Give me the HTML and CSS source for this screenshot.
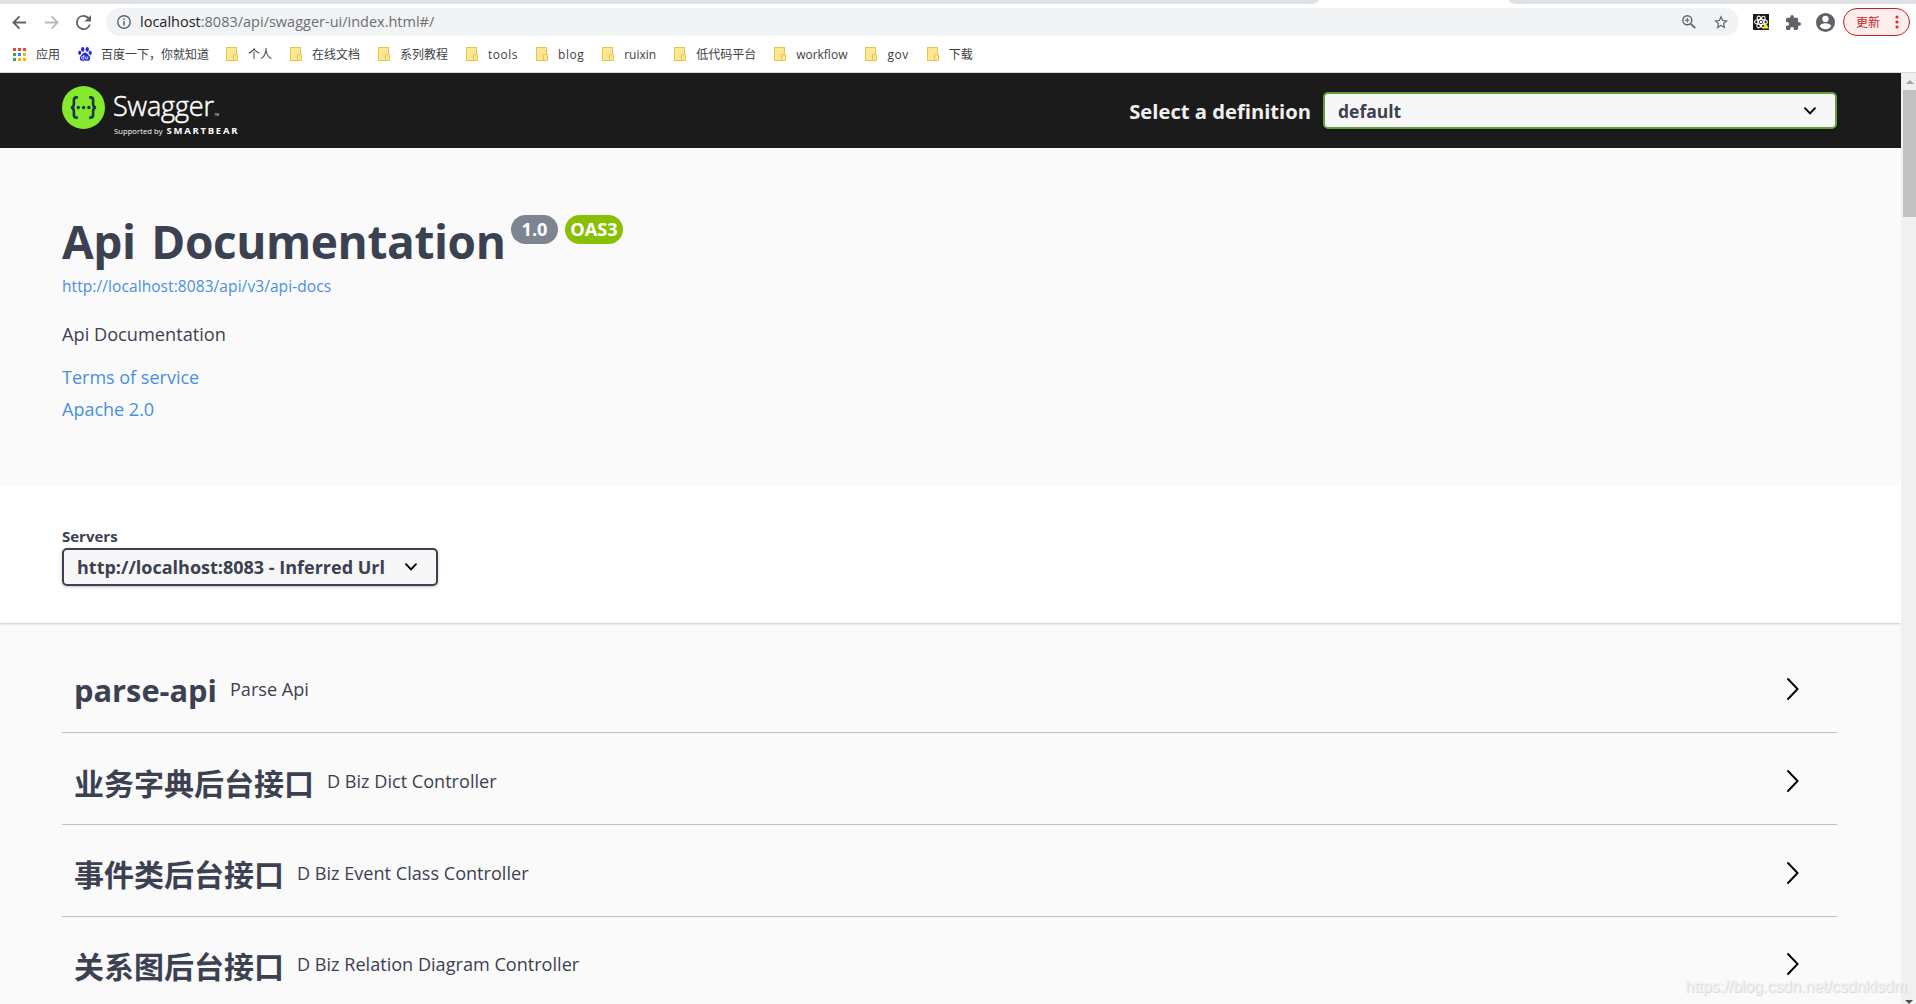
FILE: index.html
```
<!DOCTYPE html>
<html lang="zh-CN">
<head>
    <meta charset="UTF-8">
    <meta name="viewport" content="width=device-width, initial-scale=1.0">
    <title>Swagger UI</title>
    <link rel="stylesheet" href="styles.css">
</head>
<body>
    <div class="browser">
        <div class="tab-strip">
            <div class="tabs-left"></div>
            <div class="tabs-right"></div>
        </div>

        <div class="toolbar">
            <svg class="nav-icon" viewBox="0 0 16 16"><path d="M15 8H2M8 1.5L1.5 8L8 14.5" fill="none" stroke="#5f6368" stroke-width="2"/></svg>
            <svg class="nav-icon" viewBox="0 0 16 16"><path d="M1 8H14M8 1.5L14.5 8L8 14.5" fill="none" stroke="#bbbdbf" stroke-width="2"/></svg>
            <svg class="nav-icon" viewBox="4 4 16 16"><path d="M17.65 6.35A7.96 7.96 0 0 0 12 4a8 8 0 1 0 7.73 10h-2.08A6 6 0 1 1 12 6c1.66 0 3.14.69 4.22 1.78L13 11h7V4l-2.35 2.35z" fill="#5f6368"/></svg>
            <div class="omnibox">
                <svg class="info-icon" viewBox="0 0 14 14"><circle cx="7" cy="7" r="6.2" fill="none" stroke="#5f6368" stroke-width="1.4"/><path d="M6.2 6.2h1.6v4.3H6.2zM6.2 3.4h1.6V5H6.2z" fill="#5f6368"/></svg>
                <span class="address"><b>localhost</b>:8083/api/swagger-ui/index.html#/</span>
                <svg class="zoom-icon" viewBox="0 0 14 14"><g fill="none" stroke="#5f6368"><circle cx="5.3" cy="5.3" r="4.5" stroke-width="1.4"/><path d="M8.8 8.8L13.2 13.2" stroke-width="1.8"/><path d="M5.3 3v4.6M3 5.3h4.6" stroke-width="1.1"/></g></svg>
                <svg class="star-icon" viewBox="2 2 20 19"><path d="M22 9.24l-7.19-.62L12 2 9.19 8.63 2 9.24l5.46 4.73L5.82 21 12 17.27 18.18 21l-1.63-7.03L22 9.24zM12 15.4l-3.76 2.27 1-4.28-3.32-2.88 4.38-.38L12 6.1l1.71 4.04 4.38.38-3.32 2.88 1 4.28L12 15.4z" fill="#5f6368"/></svg>
            </div>
            <svg class="react-icon" viewBox="0 0 16 16">
                <rect width="16" height="16" fill="#1c1c1c"/>
                <g fill="none" stroke="#fff" stroke-width="1.1"><ellipse cx="8" cy="8" rx="6.5" ry="2.5"/><ellipse cx="8" cy="8" rx="6.5" ry="2.5" transform="rotate(60 8 8)"/><ellipse cx="8" cy="8" rx="6.5" ry="2.5" transform="rotate(120 8 8)"/></g>
                <circle cx="8" cy="8" r="1.3" fill="#fff"/>
                <path d="M12.5 8.5L16 14.5H9.5z" fill="#f5e61e"/>
            </svg>
            <svg class="puzzle-icon" viewBox="2 1 21 21"><path d="M20.5 11H19V7c0-1.1-.9-2-2-2h-4V3.5a2.5 2.5 0 0 0-5 0V5H4c-1.1 0-2 .9-2 2v3.8h1.5a2.7 2.7 0 0 1 0 5.4H2V20c0 1.1.9 2 2 2h3.8v-1.5a2.7 2.7 0 0 1 5.4 0V22H17c1.1 0 2-.9 2-2v-4h1.5a2.5 2.5 0 0 0 0-5z" fill="#5f6368"/></svg>
            <svg class="user-icon" viewBox="2 2 20 20"><path d="M12 2a10 10 0 1 0 0 20 10 10 0 0 0 0-20zm0 3a3.3 3.3 0 1 1 0 6.6A3.3 3.3 0 0 1 12 5zm0 14.2a7.2 7.2 0 0 1-6-3.22c.03-1.99 4-3.08 6-3.08s5.97 1.09 6 3.08a7.2 7.2 0 0 1-6 3.22z" fill="#5f6368"/></svg>
            <div class="update">更新
                <svg viewBox="0 0 4 14"><g fill="#d93025"><circle cx="2" cy="2" r="1.6"/><circle cx="2" cy="7" r="1.6"/><circle cx="2" cy="12" r="1.6"/></g></svg>
            </div>
        </div>

        <div class="bookmarks">
            <div class="bookmark apps">
                <svg viewBox="0 0 13 13"><path d="M0 0h3v3H0zM5 0h3v3H5zM10 0h3v3h-3z" fill="#f44336"/><path d="M0 5h3v3H0zM0 10h3v3H0z" fill="#34a853"/><path d="M5 5h3v3H5z" fill="#1a8cff"/><path d="M10 5h3v3h-3zM5 10h3v3H5zM10 10h3v3h-3z" fill="#fbaf00"/></svg>
                应用
            </div>
            <div class="bookmark baidu">
                <svg viewBox="0 0 14 14"><g fill="#2529d8"><ellipse cx="4.7" cy="2.4" rx="1.7" ry="2.3"/><ellipse cx="9.2" cy="2.4" rx="1.7" ry="2.3"/><ellipse cx="1.7" cy="5.8" rx="1.6" ry="2.1"/><ellipse cx="12.2" cy="5.8" rx="1.6" ry="2.1"/><path d="M7 5.6c1.8 0 2.4 1.6 3.8 2.8 2.4 2 1.4 5.4-1 5.4-1.2 0-1.8-.3-2.8-.3s-1.6.3-2.8.3c-2.4 0-3.4-3.4-1-5.4C4.6 7.2 5.2 5.6 7 5.6z"/></g><path d="M5.8 8v4H4.6a1.2 1.2 0 0 1 0-2.4H6M7.7 9.4v2.5h2V9.4" fill="none" stroke="#fff" stroke-width=".8"/></svg>
                百度一下，你就知道
            </div>
            <div class="bookmark"><i class="folder"></i>个人</div>
            <div class="bookmark"><i class="folder"></i>在线文档</div>
            <div class="bookmark"><i class="folder"></i>系列教程</div>
            <div class="bookmark en"><i class="folder"></i>tools</div>
            <div class="bookmark en"><i class="folder"></i>blog</div>
            <div class="bookmark"><i class="folder"></i>ruixin</div>
            <div class="bookmark"><i class="folder"></i>低代码平台</div>
            <div class="bookmark"><i class="folder"></i>workflow</div>
            <div class="bookmark en"><i class="folder"></i>gov</div>
            <div class="bookmark"><i class="folder"></i>下载</div>
        </div>
    </div>

    <div class="viewport">
        <div class="page">
            <div class="topbar">
                <svg class="logo" viewBox="0 0 180 52">
                    <circle cx="21.5" cy="21.5" r="21.5" fill="#85ea2d"/>
                    <g fill="none" stroke="#173647" stroke-width="2.6">
                        <path d="M15.8 11.4h-1.2c-2 0-2.7 1-2.7 2.700v3.600c0 2.300-.8 3.800-3 3.800 2.200 0 3 1.500 3 3.800v3.600c0 1.700.7 2.700 2.700 2.700h1.200"/>
                        <path d="M27.200 11.400h1.200c2 0 2.700 1 2.700 2.700v3.600c0 2.300.8 3.800 3 3.800-2.200 0-3 1.500-3 3.800v3.600c0 1.700-.7 2.700-2.700 2.700h-1.200"/>
                    </g>
                    <g fill="#173647"><circle cx="16.3" cy="21.5" r="1.7"/><circle cx="21.6" cy="21.5" r="1.7"/><circle cx="26.9" cy="21.5" r="1.7"/></g>
                    <text class="logo-name" x="51" y="30" textLength="101">Swagger</text>
                    <text class="logo-tm" x="152.5" y="30">TM</text>
                    <text class="logo-by" x="52" y="48" textLength="48.5">Supported by</text>
                    <text class="logo-bear" x="104.5" y="48" textLength="71">SMARTBEAR</text>
                </svg>
                <div class="definition">
                    <span>Select a definition</span>
                    <div class="select">
                        default
                        <svg class="arrow" viewBox="0 0 12 8"><path d="M1 1.2L6 6.3L11 1.2" fill="none" stroke="#000" stroke-width="1.9" stroke-linecap="round"/></svg>
                    </div>
                </div>
            </div>

            <div class="info">
                <div class="title-row">
                    <h1>Api Documentation</h1>
                    <span class="badge">1.0</span>
                    <span class="badge oas">OAS3</span>
                </div>
                <a class="docs-url">http://localhost:8083/api/v3/api-docs</a>
                <p>Api Documentation</p>
                <a class="link">Terms of service</a>
                <a class="link">Apache 2.0</a>
            </div>

            <div class="servers">
                <div class="servers-title">Servers</div>
                <div class="select">
                    http://localhost:8083 - Inferred Url
                    <svg class="arrow" viewBox="0 0 12 8"><path d="M1 1.2L6 6.3L11 1.2" fill="none" stroke="#000" stroke-width="1.9" stroke-linecap="round"/></svg>
                </div>
            </div>

            <div class="tags">
                <div class="tag">
                    <h3 class="en">parse-api</h3>
                    <small>Parse Api</small>
                    <svg viewBox="0 0 12 22"><path d="M1 1L10.6 11L1 21" fill="none" stroke="#000" stroke-width="1.9" stroke-linecap="round"/></svg>
                </div>
                <div class="tag">
                    <h3>业务字典后台接口</h3>
                    <small>D Biz Dict Controller</small>
                    <svg viewBox="0 0 12 22"><path d="M1 1L10.6 11L1 21" fill="none" stroke="#000" stroke-width="1.9" stroke-linecap="round"/></svg>
                </div>
                <div class="tag">
                    <h3>事件类后台接口</h3>
                    <small>D Biz Event Class Controller</small>
                    <svg viewBox="0 0 12 22"><path d="M1 1L10.6 11L1 21" fill="none" stroke="#000" stroke-width="1.9" stroke-linecap="round"/></svg>
                </div>
                <div class="tag">
                    <h3>关系图后台接口</h3>
                    <small>D Biz Relation Diagram Controller</small>
                    <svg viewBox="0 0 12 22"><path d="M1 1L10.6 11L1 21" fill="none" stroke="#000" stroke-width="1.9" stroke-linecap="round"/></svg>
                </div>
            </div>
        </div>

        <div class="scrollbar">
            <i class="up"></i>
            <div class="thumb"></div>
            <i class="down"></i>
        </div>
        <div class="watermark">https://blog.csdn.net/csdnklsdm</div>
    </div>
</body>
</html>
```
FILE: styles.css
```
* {
    box-sizing: border-box;
}
body {
    margin: 0;
    height: 1004px;
    overflow: hidden;
    font-family: "Open Sans", "Noto Sans CJK SC", sans-serif;
    color: #3b4151;
    background: #fff;
}
svg {
    display: block;
    flex: none;
    overflow: visible;
}

/* browser */
.browser {
    height: 73px;
    border-bottom: 1px solid #d8dadd;
}
.tab-strip {
    display: flex;
    justify-content: space-between;
    height: 4px;
}
.tabs-left,
.tabs-right {
    background: #dee1e6;
    width: 1319px;
    border-bottom-right-radius: 8px 4px;
}
.tabs-right {
    width: 407px;
    border-radius: 0 0 0 8px / 0 0 0 4px;
}
.toolbar {
    display: flex;
    align-items: center;
    height: 36px;
    padding: 0 6px 0 12px;
}
.nav-icon {
    width: 15px;
    height: 15px;
    margin-right: 17px;
}
.omnibox {
    display: flex;
    align-items: center;
    width: 1633px;
    height: 28px;
    margin-left: -2px;
    padding: 0 11px;
    border-radius: 14px;
    background: #f1f3f4;
}
.info-icon {
    width: 14px;
    height: 14px;
    margin-right: 9px;
}
.address {
    flex: 1;
    font-size: 14.5px;
    line-height: 20px;
    color: #6b6f73;
}
.address b {
    font-weight: 400;
    color: #202124;
}
.zoom-icon {
    width: 14px;
    height: 14px;
    margin-right: 18px;
}
.star-icon {
    width: 14px;
    height: 14px;
}
.react-icon {
    width: 16px;
    height: 16px;
    margin: 0 17px 0 14px;
}
.puzzle-icon {
    width: 15px;
    height: 15px;
    margin-right: 15px;
}
.user-icon {
    width: 19px;
    height: 19px;
    margin-right: 8px;
}
.update {
    display: flex;
    align-items: center;
    justify-content: space-between;
    width: 67px;
    height: 28px;
    padding: 0 10px 0 12px;
    border: 1px solid #c5221f;
    border-radius: 14px;
    background: #fceeed;
    color: #c5221f;
    font-size: 12px;
}
.update svg {
    width: 4px;
    height: 14px;
}
.bookmarks {
    display: flex;
    align-items: center;
    gap: 18px;
    height: 28px;
    padding-left: 13px;
    font-size: 12px;
    color: #3c4043;
    white-space: nowrap;
}
.bookmark {
    display: flex;
    align-items: center;
    gap: 10px;
}
.bookmark.en {
    letter-spacing: .5px;
}
.baidu {
    gap: 9px;
    margin-right: -1px;
}
.apps svg {
    width: 13px;
    height: 13px;
}
.baidu svg {
    width: 14px;
    height: 14px;
}
.folder {
    position: relative;
    width: 11px;
    height: 14px;
    margin-right: 1px;
    border: 1px solid #e8c34a;
    background: #ffe694;
}
.folder::after {
    content: "";
    position: absolute;
    right: -2px;
    bottom: -1px;
    width: 3px;
    height: 5px;
    border: 1px solid #e8c34a;
    border-radius: 1px;
    background: #ffe694;
}

/* page */
.viewport {
    position: relative;
    display: flex;
    height: 931px;
    overflow: hidden;
}
.page {
    flex: 1;
    background: #fafafa;
}
.topbar {
    display: flex;
    align-items: center;
    justify-content: space-between;
    height: 75px;
    padding: 0 64px 0 62px;
    background: #1b1b1b;
}
.logo {
    width: 180px;
    height: 52px;
    margin-top: 3px;
}
.logo text {
    fill: #fff;
}
.logo-name {
    font-size: 27px;
    font-weight: 300;
    stroke: #fff;
    stroke-width: .5px;
}
.logo-tm {
    font-size: 3px;
}
.logo-by {
    font-size: 7.6px;
}
.logo-bear {
    font-size: 9.5px;
    font-weight: 700;
}
.definition {
    display: flex;
    align-items: center;
    gap: 12px;
    font-size: 20.2px;
    font-weight: 700;
    color: #f0f0f0;
}
.select {
    display: flex;
    align-items: center;
    justify-content: space-between;
    height: 37px;
    padding: 0 19px 0 13px;
    border: 2px solid #3b4151;
    border-radius: 5px;
    background: #f7f7f7;
    box-shadow: 0 1px 3px rgba(0, 0, 0, .25);
    color: #3b4151;
    font-size: 18px;
    font-weight: 700;
}
.definition .select {
    width: 514px;
    border-color: #62a03f;
    font-size: 17.5px;
}
.arrow {
    width: 12px;
    height: 8px;
}
.info {
    height: 337px;
    padding: 65px 62px 0;
}
.title-row {
    display: flex;
    height: 56px;
}
h1 {
    width: 446px;
    margin: 0 3px 0 0;
    font-size: 46px;
    line-height: 56px;
    letter-spacing: -.4px;
    word-spacing: 4px;
    white-space: nowrap;
}
.badge {
    width: 47px;
    height: 29px;
    margin: 2px 7px 0 0;
    border-radius: 15px;
    background: #7d8492;
    color: #fff;
    font-size: 18.2px;
    font-weight: 700;
    line-height: 29px;
    text-align: center;
}
.oas {
    width: 58px;
    background: #89bf04;
}
.docs-url {
    display: block;
    margin-top: 5px;
    font-size: 15.5px;
    line-height: 24px;
    letter-spacing: .08px;
    color: #4990e2;
}
.info p {
    margin: 24px 0 15px;
    font-size: 18.2px;
    line-height: 24px;
}
.link {
    display: block;
    font-size: 18px;
    line-height: 32px;
    color: #4990e2;
}
.servers {
    height: 138px;
    padding: 41px 62px 0;
    background: #fff;
    box-shadow: 0 1px 2px rgba(0, 0, 0, .2);
}
.servers-title {
    margin-bottom: 1.5px;
    font-size: 15px;
    font-weight: 700;
    line-height: 20px;
}
.servers .select {
    width: 376px;
    height: 38px;
}
.tags {
    padding: 18.5px 64px 0 62px;
}
.tag {
    display: flex;
    align-items: center;
    height: 91.7px;
    padding: 5px 38px 0 12px;
    border-bottom: 1.25px solid #bfc0c3;
}
.tag h3 {
    margin: 0;
    padding-top: 5px;
    font-size: 30px;
    line-height: 40px;
}
.tag h3.en {
    padding-top: 2px;
    font-size: 30.8px;
}
.tag small {
    flex: 1;
    margin-left: 13px;
    font-size: 18.1px;
    line-height: 24px;
}
.tag svg {
    width: 12px;
    height: 22px;
}
.scrollbar {
    display: flex;
    flex-direction: column;
    align-items: flex-end;
    width: 15px;
    background: #f0f0f0;
}
.thumb {
    width: 13px;
    height: 127px;
    margin: 6px 0 auto;
    background: #c1c1c1;
}
.up,
.down {
    border: 4px solid transparent;
    border-top: 0;
    border-bottom-color: #a3a3a3;
    margin: 7px 2px 0 0;
}
.down {
    border: 4px solid transparent;
    border-bottom: 0;
    border-top-color: #505050;
    margin: 0 3px 0 0;
}
.watermark {
    position: absolute;
    right: 9px;
    bottom: 8px;
    font-family: "Liberation Sans", sans-serif;
    font-size: 15.9px;
    color: #f0f0f0;
    text-shadow: 1px 1px 1px #d4d4d4;
}
```
